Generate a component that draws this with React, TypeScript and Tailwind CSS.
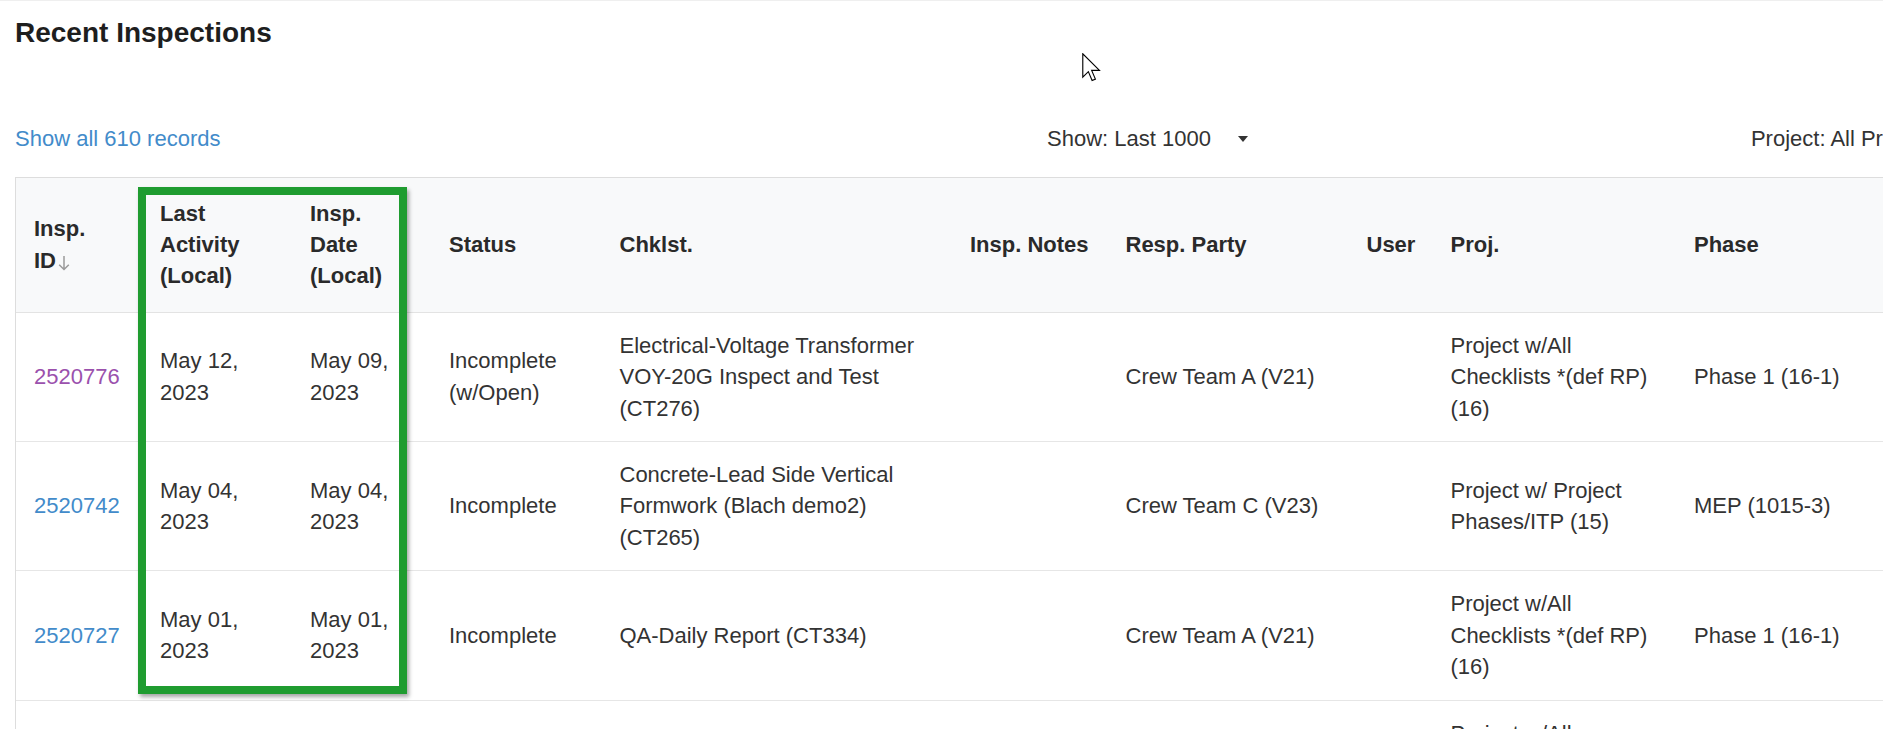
import React from "react";

type Row = {
  id: string;
  visited?: boolean;
  last: string;
  date: string;
  status: string;
  chk: string;
  notes: string;
  resp: string;
  user: string;
  proj: string;
  phase: string;
};

const rows: Row[] = [
  {
    id: "2520776",
    visited: true,
    last: "May 12, 2023",
    date: "May 09, 2023",
    status: "Incomplete (w/Open)",
    chk: "Electrical-Voltage Transformer VOY-20G Inspect and Test (CT276)",
    notes: "",
    resp: "Crew Team A (V21)",
    user: "",
    proj: "Project w/All Checklists *(def RP) (16)",
    phase: "Phase 1 (16-1)",
  },
  {
    id: "2520742",
    last: "May 04, 2023",
    date: "May 04, 2023",
    status: "Incomplete",
    chk: "Concrete-Lead Side Vertical Formwork (Blach demo2) (CT265)",
    notes: "",
    resp: "Crew Team C (V23)",
    user: "",
    proj: "Project w/ Project Phases/ITP (15)",
    phase: "MEP (1015-3)",
  },
  {
    id: "2520727",
    last: "May 01, 2023",
    date: "May 01, 2023",
    status: "Incomplete",
    chk: "QA-Daily Report (CT334)",
    notes: "",
    resp: "Crew Team A (V21)",
    user: "",
    proj: "Project w/All Checklists *(def RP) (16)",
    phase: "Phase 1 (16-1)",
  },
  {
    id: "",
    last: "",
    date: "",
    status: "",
    chk: "",
    notes: "",
    resp: "",
    user: "",
    proj: "Project w/All Checklists *(def RP) (16)",
    phase: "",
  },
];

const th =
  "px-[18px] py-[20px] text-left align-middle font-bold bg-[#f8f9fa] border-b border-[#e3e3e3] text-[#2a2a2a]";
const td = "px-[18px] py-[17px] align-middle border-b border-[#e6e6e6]";

export default function App() {
  return (
    <div className="relative w-[1883px] h-[729px] overflow-hidden bg-white border-t border-[#efefef] font-['Liberation_Sans',Arial,sans-serif] text-[22px] leading-[1.42857] text-[#333]">
      <div className="pt-[16px] pl-[15px]">
        <h2 className="text-[28px] leading-[31px] font-bold text-[#1e1e1e]">
          Recent Inspections
        </h2>

        <div className="mt-[75px] flex items-center h-[31px] whitespace-nowrap">
          <a className="w-[1032px] shrink-0 text-[#428bca] cursor-pointer">Show all 610 records</a>
          <div className="flex shrink-0 items-center">
            <span>Show: Last 1000</span>
            <svg className="ml-[27px] shrink-0" width="10" height="6" viewBox="0 0 10 6">
              <path d="M0 0 L10 0 L5 6 Z" fill="#333" />
            </svg>
          </div>
          <span className="ml-[503px] shrink-0">Project: All Projects</span>
        </div>

        <table className="mt-[22.5px] table-fixed border-separate border-spacing-0 w-[1911px] border-l border-t border-[#dddddd]">
          <colgroup>
            <col className="w-[126px]" />
            <col className="w-[150px]" />
            <col className="w-[139px]" />
            <col className="w-[170.5px]" />
            <col className="w-[350.5px]" />
            <col className="w-[155.5px]" />
            <col className="w-[241px]" />
            <col className="w-[84px]" />
            <col className="w-[243.5px]" />
            <col className="w-[251px]" />
          </colgroup>
          <thead>
            <tr>
              <th className={th}>
                Insp.
                <br />
                <span className="inline-flex items-baseline">
                  ID
                  <svg className="ml-[2px] self-end mb-[5px]" width="12" height="16" viewBox="0 0 12 16">
                    <path d="M6 1 V14.5 M1.2 9.7 L6 14.5 L10.8 9.7" stroke="#9a9a9a" strokeWidth="1.5" fill="none" />
                  </svg>
                </span>
              </th>
              <th className={th}>
                Last
                <br />
                Activity
                <br />
                (Local)
              </th>
              <th className={th}>
                Insp.
                <br />
                Date
                <br />
                (Local)
              </th>
              <th className={th}>Status</th>
              <th className={th}>Chklst.</th>
              <th className={th}>Insp. Notes</th>
              <th className={th}>Resp. Party</th>
              <th className={th}>User</th>
              <th className={th}>Proj.</th>
              <th className={th}>Phase</th>
            </tr>
          </thead>
          <tbody>
            {rows.map((r, i) => (
              <tr key={i}>
                <td className={td}>
                  <a className={r.visited ? "text-[#9b51ad]" : "text-[#428bca]"}>{r.id}</a>
                </td>
                <td className={td}>{r.last}</td>
                <td className={td}>{r.date}</td>
                <td className={td}>{r.status}</td>
                <td className={td}>{r.chk}</td>
                <td className={td}>{r.notes}</td>
                <td className={td}>{r.resp}</td>
                <td className={td}>{r.user}</td>
                <td className={td}>{r.proj}</td>
                <td className={td}>{r.phase}</td>
              </tr>
            ))}
          </tbody>
        </table>
      </div>

      {/* green highlight box */}
      <div className="absolute left-[138px] top-[186px] w-[269px] h-[507px] border-[8px] border-[#1f9c30] shadow-[2px_3px_4px_rgba(0,0,0,0.35)] pointer-events-none" />

      {/* mouse cursor */}
      <svg
        className="absolute left-[1082px] top-[52px]"
        width="19"
        height="29"
        viewBox="0 0 12.6 19.3"
      >
        <path
          d="M0.5 0.5 L0.5 16 L4.2 12.4 L6.7 18.3 L8.9 17.4 L6.4 11.6 L11.6 11.6 Z"
          fill="#ffffff"
          stroke="#000000"
          strokeWidth="0.75"
          strokeLinejoin="miter"
        />
      </svg>
    </div>
  );
}
